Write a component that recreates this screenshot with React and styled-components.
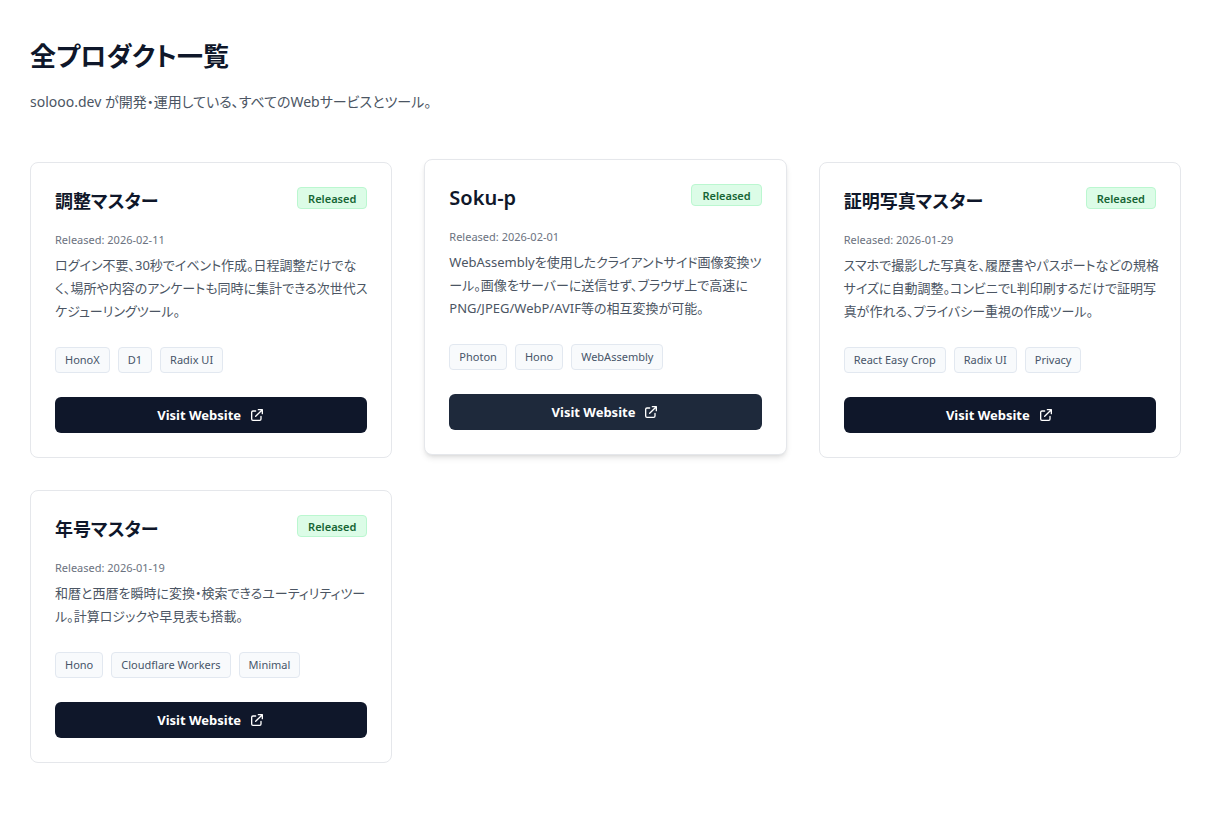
// ------------------------ React
import React from 'react'


// ------------------------ Styled-Components
import styled, { createGlobalStyle, css } from 'styled-components';

const GlobalStyle = createGlobalStyle`
  * {
    box-sizing: border-box;
  }
  body {
    margin: 0;
    background-color: #fff;
    color: #0f172a;
    font-family: 'Noto Sans', 'Noto Sans CJK JP', sans-serif;
    font-feature-settings: 'palt';
  }
  h1, h2, p, ul {
    margin: 0;
    padding: 0;
  }
`

const Wrap = styled.main`
  padding: 36px 38px 62px 30px;
`

const Title = styled.h1`
  font-size: 26px;
  line-height: 40px;
  font-weight: 700;
`

const Lead = styled.p`
  margin-top: 12px;
  font-size: 14px;
  line-height: 28px;
  color: #4b5563;
`

const Grid = styled.div`
  display: grid;
  grid-template-columns: repeat(3, minmax(0, 1fr));
  align-items: start;
  gap: 32px;
  margin-top: 46px;
  @media (max-width: 900px) {
    grid-template-columns: minmax(0, 1fr);
  }
`

const lifted = css`
  transform: translateY(-3px);
  box-shadow: 0 4px 6px -1px rgba(0, 0, 0, 0.1), 0 2px 4px -2px rgba(0, 0, 0, 0.1);
`

const Card = styled.article`
  padding: 24px;
  border: 1px solid #e5e7eb;
  border-radius: 8px;
  background-color: #fff;
  ${(props) => props.$active && lifted}
`

const CardHead = styled.div`
  display: flex;
  justify-content: space-between;
  align-items: flex-start;
`

const CardTitle = styled.h2`
  font-size: 18px;
  line-height: 28px;
  font-weight: 600;
  &:lang(en) {
    font-size: 20px;
  }
`

const Badge = styled.span`
  flex-shrink: 0;
  padding: 1px 10px 0;
  border: 1px solid #bbf7d0;
  border-radius: 4px;
  background-color: #dcfce7;
  color: #166534;
  font-size: 11px;
  line-height: 19px;
  font-weight: 600;
`

const ReleaseDate = styled.p`
  margin-top: 17px;
  font-size: 11px;
  line-height: 16px;
  color: #6b7280;
`

const Description = styled.p`
  margin: 6px -8px 0 0;
  font-size: 13px;
  line-height: 23px;
  color: #4b5563;
  white-space: pre-line;
`

const Tags = styled.ul`
  display: flex;
  flex-wrap: wrap;
  gap: 8px;
  margin-top: 24px;
  list-style: none;
`

const Tag = styled.li`
  padding: 0 9px;
  border: 1px solid #e2e8f0;
  border-radius: 4px;
  background-color: #f8fafc;
  color: #475569;
  font-size: 11px;
  line-height: 24px;
`

const VisitLink = styled.a`
  display: flex;
  justify-content: center;
  align-items: center;
  gap: 8px;
  height: 36px;
  margin-top: 24px;
  border-radius: 6px;
  background-color: ${(props) => (props.$active ? '#1e293b' : '#0f172a')};
  color: #fff;
  font-size: 13px;
  font-weight: 700;
  text-decoration: none;
`

const products = [
  {
    title: '調整マスター',
    date: '2026-02-11',
    text: 'ログイン不要、30秒でイベント作成。日程調整だけでな\nく、場所や内容のアンケートも同時に集計できる次世代ス\nケジューリングツール。',
    tags: ['HonoX', 'D1', 'Radix UI'],
  },
  {
    title: 'Soku-p',
    lang: 'en',
    date: '2026-02-01',
    text: 'WebAssemblyを使用したクライアントサイド画像変換ツ\nール。画像をサーバーに送信せず、ブラウザ上で高速に\nPNG/JPEG/WebP/AVIF等の相互変換が可能。',
    tags: ['Photon', 'Hono', 'WebAssembly'],
    active: true,
  },
  {
    title: '証明写真マスター',
    date: '2026-01-29',
    text: 'スマホで撮影した写真を、履歴書やパスポートなどの規格\nサイズに自動調整。コンビニでL判印刷するだけで証明写\n真が作れる、プライバシー重視の作成ツール。',
    tags: ['React Easy Crop', 'Radix UI', 'Privacy'],
  },
  {
    title: '年号マスター',
    date: '2026-01-19',
    text: '和暦と西暦を瞬時に変換・検索できるユーティリティツー\nル。計算ロジックや早見表も搭載。',
    tags: ['Hono', 'Cloudflare Workers', 'Minimal'],
  },
]

function ExternalIcon() {
  return (
    <svg width='16' height='16' viewBox='0 0 24 24' fill='none' stroke='currentColor' strokeWidth='2' strokeLinecap='round' strokeLinejoin='round' aria-hidden='true'>
      <path d='M10 6H6a2 2 0 00-2 2v10a2 2 0 002 2h10a2 2 0 002-2v-4M14 4h6m0 0v6m0-6L10 14' />
    </svg>
  )
}


export default function App() {

  return (
    <Wrap lang='ja'>
      <GlobalStyle />

      <Title>全プロダクト一覧</Title>
      <Lead>solooo.dev が開発・運用している、すべてのWebサービスとツール。</Lead>

      <Grid>
        {
          products.map((item) => {
            return (
              <Card key={item.title} $active={item.active}>
                <CardHead>
                  <CardTitle lang={item.lang}>{item.title}</CardTitle>
                  <Badge>Released</Badge>
                </CardHead>
                <ReleaseDate>Released: {item.date}</ReleaseDate>
                <Description>{item.text}</Description>
                <Tags>
                  {item.tags.map((tag) => <Tag key={tag}>{tag}</Tag>)}
                </Tags>
                <VisitLink href='#' $active={item.active}>
                  Visit Website
                  <ExternalIcon />
                </VisitLink>
              </Card>
            )
          })
        }
      </Grid>
    </Wrap>
  )
}
